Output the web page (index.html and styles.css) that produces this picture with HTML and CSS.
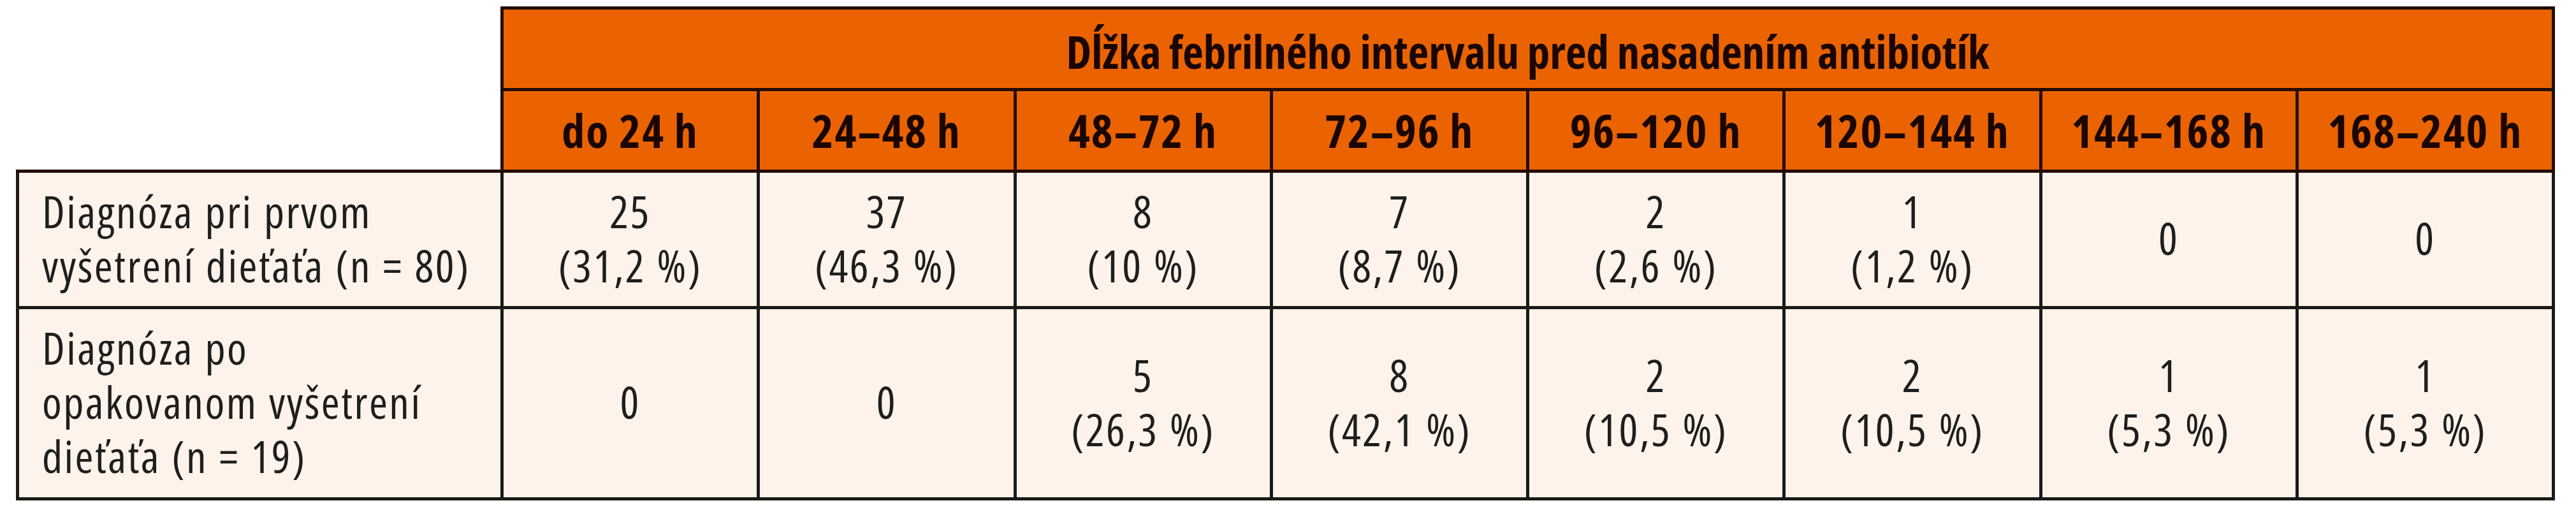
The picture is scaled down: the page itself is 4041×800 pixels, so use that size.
FILE: index.html
```html
<!DOCTYPE html>
<html lang="sk">
<head>
<meta charset="utf-8">
<title>Dĺžka febrilného intervalu</title>
<link rel="stylesheet" href="styles.css">
</head>
<body>
<div class="page">
  <table class="data">
    <colgroup>
      <col class="col-label">
      <col><col><col><col><col><col><col><col>
    </colgroup>
    <thead>
      <tr class="head-top">
        <th class="corner" rowspan="2"></th>
        <th class="title" colspan="8">Dĺžka febrilného intervalu pred nasadením antibiotík</th>
      </tr>
      <tr class="head-sub">
        <th>do 24 h</th>
        <th>24–48 h</th>
        <th>48–72 h</th>
        <th>72–96 h</th>
        <th>96–120 h</th>
        <th>120–144 h</th>
        <th>144–168 h</th>
        <th>168–240 h</th>
      </tr>
    </thead>
    <tbody>
      <tr class="row-first">
        <td class="label">Diagnóza pri prvom<br>vyšetrení dieťaťa (n = 80)</td>
        <td>25<br>(31,2 %)</td>
        <td>37<br>(46,3 %)</td>
        <td>8<br>(10 %)</td>
        <td>7<br>(8,7 %)</td>
        <td>2<br>(2,6 %)</td>
        <td>1<br>(1,2 %)</td>
        <td>0</td>
        <td>0</td>
      </tr>
      <tr class="row-second">
        <td class="label">Diagnóza po<br>opakovanom vyšetrení<br>dieťaťa (n = 19)</td>
        <td>0</td>
        <td>0</td>
        <td>5<br>(26,3 %)</td>
        <td>8<br>(42,1 %)</td>
        <td>2<br>(10,5 %)</td>
        <td>2<br>(10,5 %)</td>
        <td>1<br>(5,3 %)</td>
        <td>1<br>(5,3 %)</td>
      </tr>
    </tbody>
  </table>
</div>
</body>
</html>
```

FILE: styles.css
```css
html, body {
  margin: 0;
  padding: 0;
  background: #ffffff;
}

.page {
  padding: 10px 0 0 25px;
}

.data {
  border-collapse: collapse;
  table-layout: fixed;
  width: 3983px;
  color: #1e1e1e;
  font-family: "Open Sans", sans-serif;
  font-stretch: 75%;
}

.col-label {
  width: 760px;
}

.data th,
.data td {
  border: 5px solid #1c1a17;
  padding: 0;
  text-align: center;
  vertical-align: middle;
  white-space: nowrap;
}

.data th {
  background: #ea6300;
  border-color: #240c02;
  color: #1a0600;
  font-weight: bold;
  font-size: 72px;
  line-height: 1.2;
  letter-spacing: 2px;
}

.data th.corner {
  background: #ffffff;
  border-top: none;
  border-left: none;
}

.head-top {
  height: 128px;
}

.head-top .title {
  font-size: 71px;
  letter-spacing: 0;
  padding-top: 8px;
}

.head-sub {
  height: 128px;
}

.data td {
  background: #fef3ea;
  font-size: 70px;
  line-height: 85px;
  letter-spacing: 2.5px;
  word-spacing: 2px;
  padding-bottom: 4px;
}

.data td.label {
  text-align: left;
  padding-left: 36px;
}

.row-first {
  height: 214px;
}

.row-second {
  height: 300px;
}
```
